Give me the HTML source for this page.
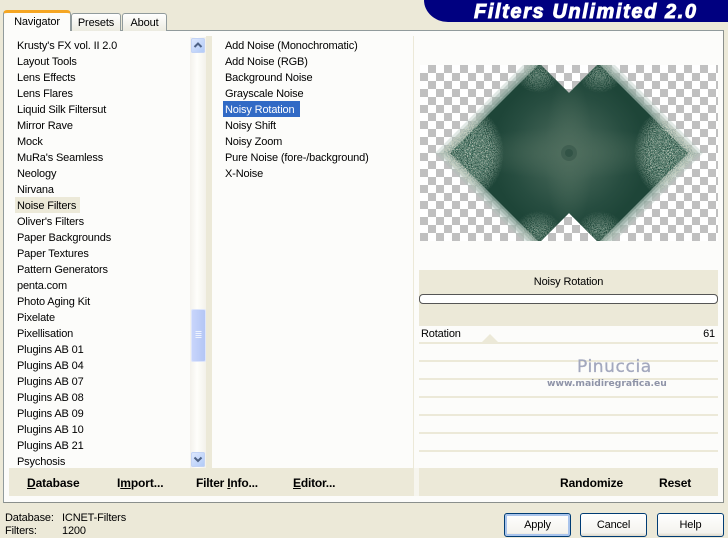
<!DOCTYPE html>
<html><head><meta charset="utf-8"><style>
html,body{margin:0;padding:0}
body{width:728px;height:538px;background:#ECE9D8;position:relative;overflow:hidden;font:11px/16px "Liberation Sans",sans-serif;letter-spacing:-.15px;color:#000}
.a{position:absolute}
.l{white-space:nowrap}
.b{font-weight:bold;font-size:12px;letter-spacing:-.1px;position:absolute;top:475px;white-space:nowrap}
.btn{position:absolute;top:513px;width:65px;height:22px;border:1px solid #003C74;border-radius:3px;background:linear-gradient(#fff,#f4f3ee 85%,#dcd8c9);text-align:center;line-height:23px}
.ln{position:absolute;left:419px;width:299px;height:2px;background:#ECE9D8}
</style></head><body>
<div class="a" style="left:424px;top:0;width:304px;height:22px;background:#000080;border-bottom-left-radius:24px 22px"></div>
<div class="a" style="left:474px;top:0;color:#fff;font:italic bold 20px/24px 'Liberation Sans',sans-serif;letter-spacing:1.6px;-webkit-text-stroke:.9px #fff;white-space:nowrap">Filters Unlimited 2.0</div>

<!-- tab pane -->
<div class="a" style="left:3px;top:30px;width:719px;height:471px;background:#FCFCFA;border:1px solid #919B9C;border-right-color:#8a8f8c;border-bottom-color:#8a8f8c;box-sizing:content-box"></div>
<div class="a" style="left:71px;top:13px;width:48px;height:17px;background:linear-gradient(#fff,#ECEBE0);border:1px solid #919B9C;border-bottom:0;border-radius:3px 3px 0 0;text-align:center;line-height:19px">Presets</div>
<div class="a" style="left:122px;top:13px;width:43px;height:17px;background:linear-gradient(#fff,#ECEBE0);border:1px solid #919B9C;border-bottom:0;border-radius:3px 3px 0 0;text-align:center;line-height:19px">About</div>
<div class="a" style="left:3px;top:10px;width:68px;height:21px;background:#FCFCFA;border:1px solid #919B9C;border-top:3px solid #F5A623;border-bottom:0;border-radius:4px 4px 0 0;box-sizing:border-box;text-align:center;line-height:18px">Navigator</div>

<!-- beige columns -->
<div class="a" style="left:9px;top:468px;width:405px;height:28px;background:#ECE9D8"></div>
<div class="a" style="left:419px;top:468px;width:299px;height:28px;background:#ECE9D8"></div>
<div class="a" style="left:206px;top:36px;width:6px;height:432px;background:#ECE9D8"></div>
<div class="a" style="left:413px;top:36px;width:1px;height:432px;background:#ECE9D8"></div>
<div class="a" style="left:414px;top:468px;width:5px;height:28px;background:#F6F5EE"></div>

<!-- scrollbar -->
<div class="a" style="left:190px;top:37px;width:16px;height:431px;background:linear-gradient(90deg,#F3F1EC,#FEFEFB 45%,#F3F1EA)"></div>
<div class="a" style="left:191px;top:38px;width:14px;height:15px;border-radius:2px;background:linear-gradient(135deg,#E1EAFE,#AEC8F7);box-shadow:inset 0 0 0 1px #C3D3F5"></div>
<svg class="a" style="left:191px;top:38px" width="14" height="15"><path d="M3.5 9 7 5.5 10.500 9" fill="none" stroke="#4D6185" stroke-width="2"/></svg>
<div class="a" style="left:191px;top:452px;width:14px;height:15px;border-radius:2px;background:linear-gradient(135deg,#E1EAFE,#AEC8F7);box-shadow:inset 0 0 0 1px #C3D3F5"></div>
<svg class="a" style="left:191px;top:452px" width="14" height="15"><path d="M3.5 5.500 7 9 10.500 5.500" fill="none" stroke="#4D6185" stroke-width="2"/></svg>
<div class="a" style="left:191px;top:309px;width:13px;height:51px;border:1px solid #DDE5FB;border-radius:2px;background:linear-gradient(90deg,#C8D5FB,#B4C6F5)"></div>
<svg class="a" style="left:194px;top:330px" width="8" height="10"><path d="M1.500 1.500h6M1.500 3.500h6M1.500 5.500h6M1.500 7.500h6" stroke="#EEF3FE"/></svg>

<!-- left list -->
<div class="a" style="left:15px;top:197px;width:65px;height:16px;background:#ECE9D8"></div>
<div class="a l" style="left:17px;top:37px;padding-top:1px">Krusty's FX vol. II 2.0<br>Layout Tools<br>Lens Effects<br>Lens Flares<br>Liquid Silk Filtersut<br>Mirror Rave<br>Mock<br>MuRa's Seamless<br>Neology<br>Nirvana<br>Noise Filters<br>Oliver's Filters<br>Paper Backgrounds<br>Paper Textures<br>Pattern Generators<br>penta.com<br>Photo Aging Kit<br>Pixelate<br>Pixellisation<br>Plugins AB 01<br>Plugins AB 04<br>Plugins AB 07<br>Plugins AB 08<br>Plugins AB 09<br>Plugins AB 10<br>Plugins AB 21<br>Psychosis</div>

<!-- mid list -->
<div class="a" style="left:223px;top:101px;width:77px;height:16px;background:#316AC5"></div>
<div class="a l" style="left:225px;top:37px;padding-top:1px">Add Noise (Monochromatic)<br>Add Noise (RGB)<br>Background Noise<br>Grayscale Noise<br><span style="color:#fff">Noisy Rotation</span><br>Noisy Shift<br>Noisy Zoom<br>Pure Noise (fore-/background)<br>X-Noise</div>

<!-- preview -->
<svg class="a" style="left:420px;top:65px" width="298" height="176" viewBox="420 65 298 176">
<defs>
<pattern id="c" x="420" y="65" width="16" height="16" patternUnits="userSpaceOnUse"><rect x="0" y="0" width="16" height="16" fill="#fff"/><rect x="8" y="0" width="8" height="8" fill="#C0C0C0"/><rect x="0" y="8" width="8" height="8" fill="#C0C0C0"/></pattern>
<radialGradient id="g" gradientUnits="userSpaceOnUse" cx="569" cy="153" r="78"><stop offset="0" stop-color="#48675A"/><stop offset=".35" stop-color="#3D5F51"/><stop offset=".75" stop-color="#274D40"/><stop offset="1" stop-color="#1E4538"/></radialGradient>
<radialGradient id="bd"><stop offset="0" stop-color="#52705F" stop-opacity=".55"/><stop offset="1" stop-color="#52705F" stop-opacity="0"/></radialGradient>
<filter id="n" x="0" y="0" width="100%" height="100%"><feTurbulence type="fractalNoise" baseFrequency=".95" numOctaves="2" seed="4"/><feColorMatrix values="0 0 0 0 .6  0 0 0 0 .65  0 0 0 0 .55  5 0 0 0 -2"/></filter>
<filter id="d" x="0" y="0" width="100%" height="100%"><feTurbulence type="fractalNoise" baseFrequency=".95" numOctaves="2" seed="9"/><feColorMatrix values="0 0 0 0 .08  0 0 0 0 .2  0 0 0 0 .15  5 0 0 0 -2"/></filter>
<radialGradient id="mg"><stop offset="0" stop-color="#fff"/><stop offset=".6" stop-color="#ccc"/><stop offset="1" stop-color="#000"/></radialGradient>
<radialGradient id="mh"><stop offset="0" stop-color="#bbb"/><stop offset="1" stop-color="#000"/></radialGradient>
<mask id="m" maskUnits="userSpaceOnUse" x="420" y="65" width="298" height="176">
<ellipse cx="468" cy="153" rx="36" ry="46" fill="url(#mg)"/><ellipse cx="670" cy="153" rx="36" ry="46" fill="url(#mg)"/>
<ellipse cx="538" cy="75" rx="22" ry="18" fill="url(#mh)"/><ellipse cx="600" cy="75" rx="22" ry="18" fill="url(#mh)"/>
<ellipse cx="538" cy="231" rx="24" ry="20" fill="url(#mh)"/><ellipse cx="600" cy="231" rx="24" ry="20" fill="url(#mh)"/>
</mask>
<clipPath id="cs"><path d="M450 153 538 65H541L569 93 597 65H600L688 153 600 241H597L569 213 541 241H538Z"/></clipPath>
<clipPath id="co"><path d="M439 153 527 65H541L569 93 597 65H611L699 153 611 241H597L569 213 541 241H527Z"/></clipPath>
</defs>
<rect x="420" y="65" width="298" height="176" fill="url(#c)"/>
<path d="M435 153 523 65H541L569 93 597 65H615L703 153 615 241H597L569 213 541 241H523Z" fill="#A9BDB4" opacity=".35"/>
<path d="M439 153 527 65H541L569 93 597 65H611L699 153 611 241H597L569 213 541 241H527Z" fill="#9AB0A6" opacity=".45"/>
<path d="M443 153 531 65H541L569 93 597 65H607L695 153 607 241H597L569 213 541 241H531Z" fill="#86A096" opacity=".5"/>
<path d="M447 153 535 65H541L569 93 597 65H603L691 153 603 241H597L569 213 541 241H535Z" fill="#6C8A80" opacity=".65"/>
<path d="M450 153 538 65H541L569 93 597 65H600L688 153 600 241H597L569 213 541 241H538Z" fill="url(#g)"/>
<g clip-path="url(#cs)"><ellipse cx="569" cy="153" rx="110" ry="26" fill="url(#bd)"/><ellipse cx="569" cy="153" rx="24" ry="80" fill="url(#bd)"/></g>
<g clip-path="url(#co)"><rect x="420" y="65" width="298" height="176" filter="url(#n)" mask="url(#m)"/></g>
<g clip-path="url(#cs)"><rect x="420" y="65" width="298" height="176" filter="url(#d)" mask="url(#m)"/></g>
<circle cx="569" cy="153" r="8" fill="#3A5A4D" opacity=".7"/><circle cx="569" cy="153" r="4" fill="#2E5044" opacity=".8"/>
</svg>

<!-- right controls -->
<div class="a" style="left:419px;top:270px;width:299px;height:56px;background:#ECE9D8"></div>
<div class="a" style="left:419px;top:274px;width:299px;text-align:center">Noisy Rotation</div>
<div class="a" style="left:419px;top:294px;width:297px;height:8px;background:#fff;border:1px solid #555;border-radius:4px"></div>
<div class="a l" style="left:421px;top:326px">Rotation</div>
<div class="a" style="left:695px;top:326px;width:20px;text-align:right">61</div>
<div class="ln" style="top:342px"></div><div class="ln" style="top:360px"></div><div class="ln" style="top:378px"></div><div class="ln" style="top:396px"></div><div class="ln" style="top:414px"></div><div class="ln" style="top:432px"></div><div class="ln" style="top:450px"></div>
<svg class="a" style="left:481px;top:333px" width="18" height="10"><path d="M0 10 9 1 18 10Z" fill="#ECE9D8"/></svg>
<div class="a l" style="left:577px;top:357px;color:#A3A8BE;font:17px/20px 'DejaVu Sans',sans-serif;letter-spacing:.6px;-webkit-text-stroke:.3px #A3A8BE">Pinuccia</div>
<div class="a l" style="left:547px;top:376px;color:#8F94A8;font:bold 9.2px/16px 'DejaVu Sans',sans-serif;letter-spacing:0">www.maidiregrafica.eu</div>

<!-- toolbar -->
<div class="b" style="left:27px"><u>D</u>atabase</div>
<div class="b" style="left:117px">I<u>m</u>port...</div>
<div class="b" style="left:196px;letter-spacing:-.2px">Filter <u>I</u>nfo...</div>
<div class="b" style="left:293px;letter-spacing:-.2px"><u>E</u>ditor...</div>
<div class="b" style="left:560px">Randomize</div>
<div class="b" style="left:659px">Reset</div>

<!-- status -->
<div class="a l" style="left:5px;top:512px;line-height:13px">Database:<br>Filters:</div>
<div class="a l" style="left:62px;top:512px;line-height:13px">ICNET-Filters<br>1200</div>
<div class="btn" style="left:504px;box-shadow:inset 0 0 0 2px #A9C4EC">Apply</div>
<div class="btn" style="left:580px">Cancel</div>
<div class="btn" style="left:657px">Help</div>
</body></html>
